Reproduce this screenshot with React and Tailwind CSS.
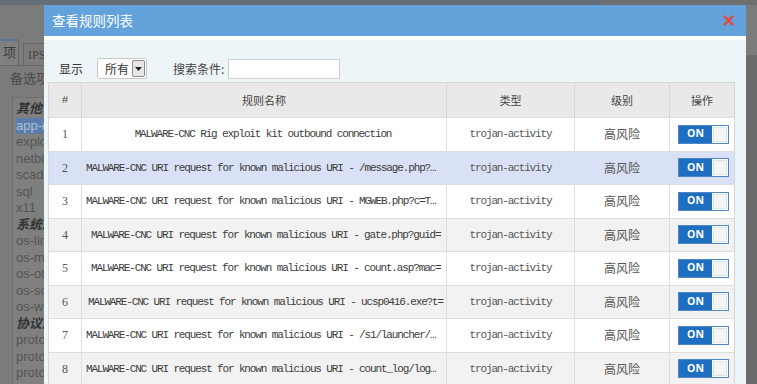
import React from "react";

const mono = { fontFamily: '"Liberation Mono", "Courier New", monospace' };

const rows = [
    { id: 1, name: "MALWARE-CNC Rig exploit kit outbound connection", mode: "center" },
    { id: 2, name: "MALWARE-CNC URI request for known malicious URI - /message.php?id=", mode: "dots", hl: true },
    { id: 3, name: "MALWARE-CNC URI request for known malicious URI - MGWEB.php?c=TestJson", mode: "dots" },
    { id: 4, name: "MALWARE-CNC URI request for known malicious URI - gate.php?guid=", mode: "clip9" },
    { id: 5, name: "MALWARE-CNC URI request for known malicious URI - count.asp?mac=", mode: "clip9" },
    { id: 6, name: "MALWARE-CNC URI request for known malicious URI - ucsp0416.exe?t=", mode: "clip6" },
    { id: 7, name: "MALWARE-CNC URI request for known malicious URI - /s1/launcher/update", mode: "dots" },
    { id: 8, name: "MALWARE-CNC URI request for known malicious URI - count_log/log/index.php", mode: "dots" },
];

const sideItems = [
    { t: "其他", g: true },
    { t: "app-d", sel: true },
    { t: "exploi" },
    { t: "netbic" },
    { t: "scada" },
    { t: "sql" },
    { t: "x11" },
    { t: "系统漏", g: true },
    { t: "os-linu" },
    { t: "os-mc" },
    { t: "os-oth" },
    { t: "os-sol" },
    { t: "os-win" },
    { t: "协议漏", g: true },
    { t: "proto" },
    { t: "proto" },
    { t: "proto" },
];

const Toggle = () => (
    <div className="flex h-[19px] w-[51px] border border-[#4f86c6] bg-white">
        <div
            className="flex w-[33px] items-center justify-center bg-[#1e6fc0] text-[10.5px] font-bold text-white"
            style={{ fontFamily: '"Open Sans", "Liberation Sans", sans-serif' }}
        >
            ON
        </div>
        <div className="m-[1px] flex-1 border border-[#dde3ea] bg-[#f4f4f4]"></div>
    </div>
);

const nameCls = {
    center: "justify-center px-1 text-center",
    dots: "pl-1 pr-[9px] text-left",
    clip9: "pl-[9px] pr-[4px] text-left",
    clip6: "pl-[6px] pr-[4px] text-left",
};

const App = () => {
    return (
        <div
            className="relative h-[384px] w-[757px] overflow-hidden bg-[#7b7b7b]"
            style={{ fontFamily: '"Liberation Sans", "Noto Sans CJK SC", sans-serif' }}
        >
            {/* page behind the dialog */}
            <div className="flex h-[30px]">
                <div className="h-[5px] w-[601px] bg-[#656d79]"></div>
                <div className="h-[5px] flex-1 bg-[#6f6f6f]"></div>
            </div>
            <div className="flex h-[36px] items-end border-b border-[#666]">
                <div className="flex h-[26px] w-[19px] items-center justify-end border-t-2 border-r border-[#5b7594] border-r-[#666] bg-[#808080] pr-[2px] text-[13px] text-[#3d3d3d]">
                    项
                </div>
                <div className="ml-[4px] flex h-[22px] w-[30px] items-center border border-b-0 border-[#666] pl-[4px] text-[12px] text-[#444]" style={{ fontFamily: '"Liberation Serif", serif' }}>
                    IPS
                </div>
            </div>
            <div className="pl-[10px] pt-[5px] text-[13px] leading-[16px] text-[#4a4a4a]">备选项</div>
            <div className="ml-[12px] mt-[10px] h-[300px] w-[60px] border border-[#6e6e6e] bg-[#7f7f7f] pl-[3px] pt-[3px]">
                {sideItems.map((s, i) => (
                    <div
                        key={i}
                        className={
                            "h-[16.5px] whitespace-nowrap text-[13px] leading-[16.5px] " +
                            (s.g
                                ? "font-bold italic text-[#333]"
                                : s.sel
                                ? "bg-[#5a7ea8] text-[#a9c0dc]"
                                : "text-[#545454]")
                        }
                    >
                        {s.t}
                    </div>
                ))}
            </div>
            <div className="absolute right-0 top-[55px] h-[330px] w-[11px] bg-[#6a6a6a]"></div>

            {/* dialog */}
            <div className="absolute left-[44px] top-[5px] flex h-[400px] w-[702px] flex-col bg-[#eef5f9]">
                <div className="flex h-[31px] items-center justify-between bg-[#63a2db] pl-[8px] pr-[12px]">
                    <span className="text-[13.5px] text-white" style={{ fontFamily: '"Noto Sans CJK SC", sans-serif' }}>
                        查看规则列表
                    </span>
                    <svg width="11" height="11" viewBox="0 0 11 11">
                        <path d="M1.5 1.5 L9.5 9.5 M9.5 1.5 L1.5 9.5" stroke="#e9483a" strokeWidth="2.4" strokeLinecap="round" />
                    </svg>
                </div>
                <div className="h-[4px] bg-white"></div>
                <div className="flex flex-col pl-[4px] pr-[11px] pt-[18px]">
                    <div
                        className="flex h-[21px] items-center text-[12px] text-[#333]"
                        style={{ fontFamily: '"Noto Sans CJK SC", sans-serif' }}
                    >
                        <span className="ml-[11px]">显示</span>
                        <div className="ml-[14px] flex h-[21px] w-[50px] items-center rounded-[3px] border border-[#c9c9c9] bg-white">
                            <span className="ml-[7px] flex-1">所有</span>
                            <div className="mr-[1px] flex h-[17px] w-[13px] items-center justify-center rounded-[2px] border border-[#8a8a8a] bg-[#e6e6e6]">
                                <svg width="7" height="4" viewBox="0 0 7 4">
                                    <path d="M0 0 L7 0 L3.5 4 Z" fill="#222" />
                                </svg>
                            </div>
                        </div>
                        <span className="ml-[26px] text-[#444]">搜索条件:</span>
                        <div className="ml-[4px] h-[20px] w-[112px] border border-[#cfcfcf] bg-white"></div>
                    </div>

                    <div className="mt-[3px] border border-[#d6d6d6] bg-white">
                        <div
                            className="flex h-[34px] bg-[#e9e9e9] text-[11px] text-[#444]"
                            style={{ fontFamily: '"Noto Sans CJK SC", sans-serif' }}
                        >
                            <div className="flex w-[33px] items-center justify-center border-r border-[#d6d6d6]" style={mono}>#</div>
                            <div className="flex w-[365px] items-center justify-center border-r border-[#d6d6d6]">规则名称</div>
                            <div className="flex w-[128px] items-center justify-center border-r border-[#d6d6d6]">类型</div>
                            <div className="flex w-[95px] items-center justify-center border-r border-[#d6d6d6]">级别</div>
                            <div className="flex flex-1 items-center justify-center">操作</div>
                        </div>
                        {rows.map((r) => (
                            <div
                                key={r.id}
                                className={
                                    "flex h-[33.5px] border-t border-[#dedede] " +
                                    (r.hl ? "bg-[#d9e1f6]" : r.id % 2 === 0 ? "bg-[#f2f2f2]" : "bg-white")
                                }
                            >
                                <div
                                    className="flex w-[33px] items-center justify-center border-r border-[#dedede] text-[12px] text-[#555]"
                                    style={{ fontFamily: '"Liberation Serif", serif' }}
                                >
                                    {r.id}
                                </div>
                                <div
                                    className={
                                        "flex w-[365px] items-center overflow-hidden border-r border-[#dedede] " +
                                        nameCls[r.mode]
                                    }
                                >
                                    <span
                                        className={
                                            "block whitespace-nowrap text-[11px] tracking-[-1.14px] text-[#3c3c3c] " +
                                            (r.mode === "dots" ? "overflow-hidden text-ellipsis" : "pr-[2px]")
                                        }
                                        style={mono}
                                    >
                                        {r.name}
                                    </span>
                                </div>
                                <div
                                    className="flex w-[128px] items-center justify-center border-r border-[#dedede] text-[11px] tracking-[-1.14px] text-[#555]"
                                    style={mono}
                                >
                                    trojan-activity
                                </div>
                                <div
                                    className="flex w-[95px] items-center justify-center border-r border-[#dedede] text-[12px] text-[#555]"
                                    style={{ fontFamily: '"Noto Sans CJK SC", sans-serif' }}
                                >
                                    高风险
                                </div>
                                <div className="flex flex-1 items-center justify-center pl-[3px]">
                                    <Toggle />
                                </div>
                            </div>
                        ))}
                    </div>
                </div>
            </div>
        </div>
    );
};

export default App;
